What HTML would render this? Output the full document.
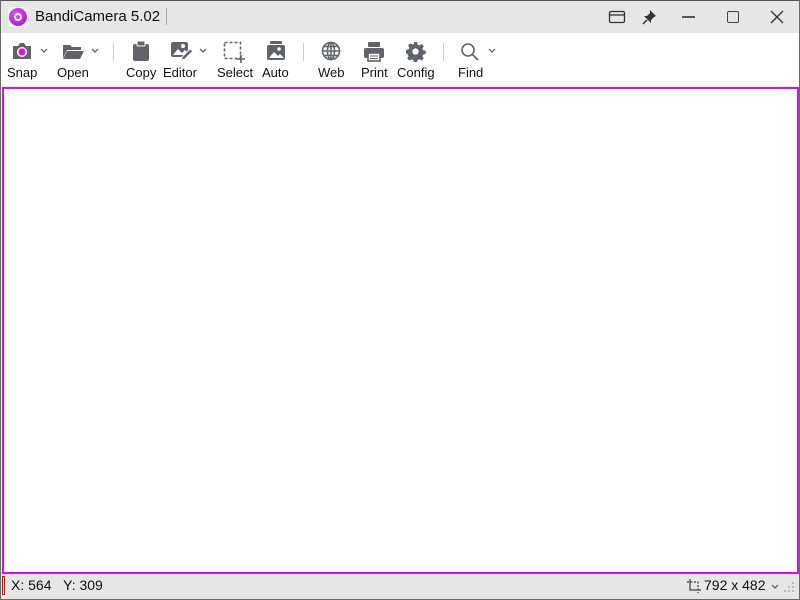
<!DOCTYPE html>
<html><head><style>
*{margin:0;padding:0;box-sizing:border-box}
body{width:800px;height:600px;overflow:hidden;background:#fff;font-family:"Liberation Sans",sans-serif;position:relative}
.a{position:absolute}
.lbl{position:absolute;top:65px;font-size:13px;color:#111;white-space:nowrap}
.chev{position:absolute;top:48px}
svg{position:absolute}
</style></head><body>
<div class="a" style="left:0;top:0;width:800px;height:33px;background:#e6e6e6"></div>
<div class="a" style="left:0;top:0;width:800px;height:600px;border:1px solid #6a6a6a;border-top-color:#555;z-index:5;pointer-events:none"></div>
<div class="a" style="left:8px;top:7px;width:20px;height:20px;border-radius:5px;background:#fff"></div>
<div class="a" style="left:9px;top:8px;width:18px;height:18px;border-radius:50%;background:radial-gradient(circle at 40% 35%,#e050f0,#a010c0)"></div>
<div class="a" style="left:14px;top:13px;width:8px;height:8px;border-radius:50%;border:2px solid #fff"></div>
<div class="a" style="left:35px;top:8px;font-size:15px;color:#111">BandiCamera 5.02</div>
<div class="a" style="left:166px;top:8px;width:1px;height:17px;background:#aaa"></div>
<svg style="left:608px;top:9px" width="18" height="16"><rect x="1.5" y="2.5" width="15" height="11" rx="1.5" fill="none" stroke="#333" stroke-width="1.3"/><line x1="2" y1="6" x2="16" y2="6" stroke="#333" stroke-width="1.3"/></svg>
<svg style="left:641px;top:8px" width="18" height="18"><path d="M9 2 L15 8 L13 9 L10 12 L10 15 L3 8 L6 8 L9 5Z" fill="#333"/><line x1="6" y1="12" x2="2" y2="16" stroke="#333" stroke-width="1.5"/></svg>
<div class="a" style="left:682px;top:16px;width:13px;height:1.5px;background:#555"></div>
<div class="a" style="left:727px;top:11px;width:12px;height:12px;border:1.5px solid #444;border-radius:2px"></div>
<svg style="left:770px;top:10px" width="14" height="14"><path d="M1 1L13 13M13 1L1 13" stroke="#333" stroke-width="1.3"/></svg>
<svg style="left:11px;top:42px" width="22" height="18"><path d="M2 4h5l2-3h4l2 3h5v13h-18z" fill="#5f646b"/><circle cx="11" cy="10" r="5" fill="#fff"/><circle cx="11" cy="10" r="3.6" fill="#e010e0"/></svg>
<svg class="chev" style="left:40px" width="8" height="6"><path d="M1 1l3 3 3-3" fill="none" stroke="#555" stroke-width="1.2"/></svg>
<svg style="left:62px;top:42px" width="22" height="18"><path d="M1 3h7l2 2h9v3H5L1 16z" fill="#5f646b"/><path d="M5 9h17l-4 8H1z" fill="#5f646b"/></svg>
<svg class="chev" style="left:91px" width="8" height="6"><path d="M1 1l3 3 3-3" fill="none" stroke="#555" stroke-width="1.2"/></svg>
<div class="a" style="left:113px;top:43px;width:1px;height:18px;background:#ccc"></div>
<svg style="left:132px;top:40px" width="18" height="22"><rect x="1" y="4" width="16" height="17" rx="2" fill="#5f646b"/><rect x="5" y="1" width="8" height="5" rx="1" fill="#5f646b" stroke="#fff" stroke-width="1"/></svg>
<svg style="left:170px;top:41px" width="24" height="20"><rect x="1" y="1" width="17" height="15" rx="2" fill="#5f646b"/><path d="M3 14l5-6 4 4 3-3 3 3v2z" fill="#fff"/><circle cx="13" cy="5" r="2" fill="#fff"/><path d="M12 16l8-8 3 2-8 8-4 1z" fill="#5f646b" stroke="#fff" stroke-width="1"/></svg>
<svg class="chev" style="left:199px" width="8" height="6"><path d="M1 1l3 3 3-3" fill="none" stroke="#555" stroke-width="1.2"/></svg>
<svg style="left:223px;top:41px" width="22" height="22"><rect x="1.5" y="1.5" width="16" height="16" fill="none" stroke="#5f646b" stroke-width="1.6" stroke-dasharray="3 2"/><path d="M18 14v8M14 18h8" stroke="#5f646b" stroke-width="1.6"/></svg>
<svg style="left:266px;top:40px" width="20" height="22"><rect x="4" y="1" width="12" height="3" rx="1" fill="#5f646b"/><rect x="1" y="5" width="18" height="15" rx="2" fill="#5f646b"/><path d="M3 18l5-6 4 4 2-2 4 4z" fill="#fff"/><circle cx="13" cy="9" r="1.8" fill="#fff"/></svg>
<div class="a" style="left:303px;top:43px;width:1px;height:18px;background:#ccc"></div>
<svg style="left:321px;top:41px" width="20" height="20"><g fill="none" stroke="#5f646b" stroke-width="1.6"><circle cx="10" cy="10" r="8.5"/><ellipse cx="10" cy="10" rx="3.5" ry="8.5"/><path d="M1.5 10h17M3 5.5h14M3 14.5h14M10 1.5v17"/></g></svg>
<svg style="left:363px;top:41px" width="22" height="21"><rect x="5" y="1" width="12" height="5" rx="1" fill="#5f646b"/><rect x="1" y="7" width="20" height="10" rx="2" fill="#5f646b"/><rect x="5" y="12" width="12" height="8" fill="#fff" stroke="#5f646b" stroke-width="1.6"/><path d="M7 15h8M7 17.5h8" stroke="#5f646b"/></svg>
<svg style="left:405px;top:41px" width="21" height="21" viewBox="0 0 20 20"><path fill="#5f646b" d="M8.5 1h3l.5 2.4 1.7.8 2.1-1.3 2.1 2.1-1.3 2.1.8 1.7 2.4.5v3l-2.4.5-.8 1.7 1.3 2.1-2.1 2.1-2.1-1.3-1.700.8-.5 2.4h-3l-.5-2.4-1.7-.8-2.1 1.3-2.1-2.1 1.3-2.1-.8-1.7L1 11.5v-3l2.4-.5.8-1.7-1.3-2.1 2.1-2.1 2.1 1.3 1.7-.8z"/><circle cx="10" cy="10" r="3" fill="#fff"/></svg>
<div class="a" style="left:443px;top:43px;width:1px;height:18px;background:#ccc"></div>
<svg style="left:460px;top:42px" width="20" height="20"><circle cx="8" cy="8" r="6" fill="none" stroke="#5f646b" stroke-width="1.6"/><path d="M12.5 12.5l5.5 5.5" stroke="#5f646b" stroke-width="1.8"/></svg>
<svg class="chev" style="left:488px" width="8" height="6"><path d="M1 1l3 3 3-3" fill="none" stroke="#555" stroke-width="1.2"/></svg>
<div class="lbl" style="left:7px">Snap</div>
<div class="lbl" style="left:57px">Open</div>
<div class="lbl" style="left:126px">Copy</div>
<div class="lbl" style="left:163px">Editor</div>
<div class="lbl" style="left:217px">Select</div>
<div class="lbl" style="left:262px">Auto</div>
<div class="lbl" style="left:318px">Web</div>
<div class="lbl" style="left:361px">Print</div>
<div class="lbl" style="left:397px">Config</div>
<div class="lbl" style="left:458px">Find</div>
<div class="a" style="left:2px;top:87px;width:797px;height:487px;border:2px solid #d010e8"></div>
<div class="a" style="left:0;top:574px;width:800px;height:26px;background:#e6e6e6"></div>
<div class="a" style="left:2px;top:576px;width:3px;height:19px;border:1px solid #e00000"></div>
<div class="a" style="left:11px;top:577px;font-size:14px;color:#111">X: 564&nbsp;&nbsp;&nbsp;Y: 309</div>
<svg style="left:686px;top:578px" width="16" height="16"><path d="M4 1v11h11" fill="none" stroke="#444" stroke-width="1.3"/><path d="M1 4h11v11" fill="none" stroke="#444" stroke-width="1.3" stroke-dasharray="2 1.5"/></svg>
<div class="a" style="left:704px;top:577px;font-size:14px;color:#111">792 x 482</div>
<svg style="left:771px;top:584px" width="8" height="6"><path d="M1 1l3 3 3-3" fill="none" stroke="#555" stroke-width="1.2"/></svg>
<svg style="left:784px;top:582px" width="12" height="12"><g fill="#bbb"><rect x="8" y="0" width="2" height="2"/><rect x="4" y="4" width="2" height="2"/><rect x="8" y="4" width="2" height="2"/><rect x="0" y="8" width="2" height="2"/><rect x="4" y="8" width="2" height="2"/><rect x="8" y="8" width="2" height="2"/></g></svg>
</body></html>
